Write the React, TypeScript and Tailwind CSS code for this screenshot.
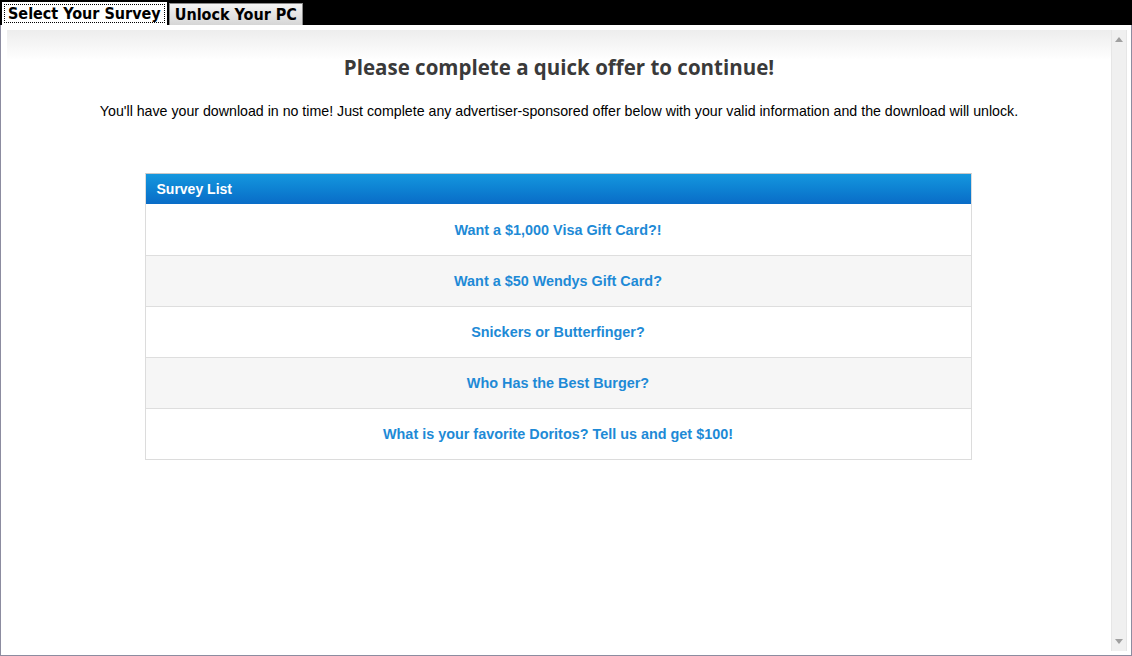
const SURVEYS = [
  "Want a $1,000 Visa Gift Card?!",
  "Want a $50 Wendys Gift Card?",
  "Snickers or Butterfinger?",
  "Who Has the Best Burger?",
  "What is your favorite Doritos? Tell us and get $100!",
];

export default function App() {
  return (
    <div className="w-[1132px] h-[656px] bg-white flex flex-col overflow-hidden">
      {/* tab strip */}
      <div className="h-[25px] bg-black flex items-end gap-[2px] pl-[2px] shrink-0">
        <div className="h-[23px] bg-white p-[2px] self-end">
          <div
            className="h-full border border-dotted border-black px-[3px] flex items-center text-[16px] font-semibold leading-none text-black"
            style={{ fontFamily: '"DejaVu Sans Condensed", "DejaVu Sans", sans-serif' }}
          >
            Select Your Survey
          </div>
        </div>
        <div
          className="h-[22px] border border-[#8a8a8a] border-b-0 bg-gradient-to-b from-[#f4f4f4] to-[#d6d6d6] px-[5px] flex items-center text-[16px] font-semibold leading-none text-black"
          style={{ fontFamily: '"DejaVu Sans Condensed", "DejaVu Sans", sans-serif' }}
        >
          Unlock Your PC
        </div>
      </div>

      {/* frame */}
      <div className="flex-1 flex border-l border-r border-b border-[#8c8ca0] pt-[5px] pl-[6px] pr-[4px] pb-[4px] min-h-0">
        <div className="flex-1 bg-gradient-to-b from-[#ededed] via-white to-white bg-[length:100%_60px] bg-no-repeat bg-white flex flex-col items-center">
          <h1
            className="mt-[22px] text-[20.5px] leading-[30px] font-bold text-[#3a3a3a]"
            style={{ fontFamily: '"Open Sans", sans-serif' }}
          >
            Please complete a quick offer to continue!
          </h1>
          <p
            className="mt-[19px] text-[14.2px] leading-[20px] text-black"
            style={{ fontFamily: '"Liberation Sans", Arial, sans-serif' }}
          >
            You'll have your download in no time! Just complete any advertiser-sponsored offer below with your valid information and the download will unlock.
          </p>

          <div
            className="mt-[52px] w-[827px] mr-[2px] border border-[#dcdcdc] border-t-[#c8c8c8]"
            style={{ fontFamily: '"Liberation Sans", Arial, sans-serif' }}
          >
            <div className="h-[30px] bg-gradient-to-b from-[#1597de] to-[#0a6cc7] flex items-center pl-[11px] text-white text-[14px] font-bold">
              Survey List
            </div>
            {SURVEYS.map((s, i) => (
              <div
                key={s}
                className={`h-[51px] flex items-center justify-center pt-[2px] text-[14.4px] font-bold text-[#1e8ad6] ${
                  i > 0 ? "border-t border-[#dedede]" : ""
                } ${i % 2 === 1 ? "bg-[#f6f6f6]" : "bg-white"}`}
              >
                {s}
              </div>
            ))}
          </div>
        </div>

        {/* scrollbar */}
        <div className="w-[16px] bg-[#f0f0f0] border-l border-r border-[#e6e6e6] flex flex-col items-center justify-between py-[7px]">
          <svg width="8" height="5" viewBox="0 0 8 5">
            <polygon points="4,0 8,5 0,5" fill="#a0a0a0" />
          </svg>
          <svg width="8" height="5" viewBox="0 0 8 5">
            <polygon points="0,0 8,0 4,5" fill="#a0a0a0" />
          </svg>
        </div>
      </div>
    </div>
  );
}
